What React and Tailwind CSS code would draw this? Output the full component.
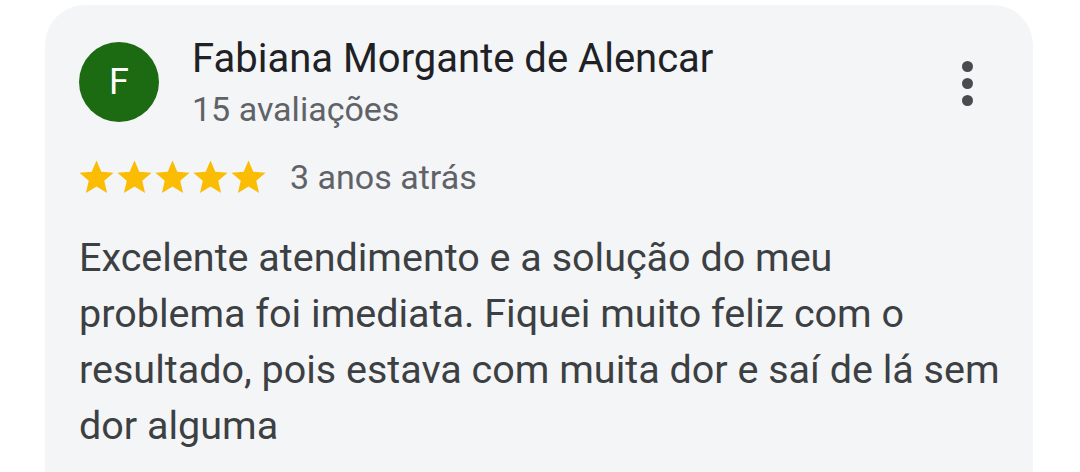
import React from 'react';

const Star = () => (
  <svg viewBox="0 0 24 24" className="w-[41px] h-[41px] -mx-[1.5px]" fill="#fbbc04">
    <path d="M12 17.27L18.18 21l-1.64-7.03L22 9.24l-7.19-.61L12 2 9.19 8.63 2 9.24l5.46 4.73L5.82 21z" />
  </svg>
);

const ReviewCard = () => (
  <div className="bg-[#f4f5f7] rounded-[40px] ml-[45px] mr-[47px] mt-[5px] pl-[34px] pr-[33px] pt-[30px] pb-[60px] font-['Roboto',sans-serif]">
    <div className="flex items-start">
      <div className="mt-[7px] w-[80px] h-[80px] rounded-full bg-[#1c6a12] flex items-center justify-center text-white text-[36px] shrink-0">
        F
      </div>
      <div className="ml-[33px] flex-1">
        <div className="text-[40px] leading-[48px] text-[#202124]">Fabiana Morgante de Alencar</div>
        <div className="text-[34px] leading-[40px] text-[#5f6368] mt-[6px]">15 avaliações</div>
      </div>
      <div className="flex flex-col items-center gap-[6px] mt-[26px] mr-[27px]">
        <span className="w-[11px] h-[11px] rounded-full bg-[#4a4b4e]" />
        <span className="w-[11px] h-[11px] rounded-full bg-[#4a4b4e]" />
        <span className="w-[11px] h-[11px] rounded-full bg-[#4a4b4e]" />
      </div>
    </div>
    <div className="flex items-center mt-[28px] h-[40px]">
      <div className="flex -ml-[2px]">
        <Star />
        <Star />
        <Star />
        <Star />
        <Star />
      </div>
      <span className="ml-[23px] text-[34px] leading-[40px] text-[#5f6368]">3 anos atrás</span>
    </div>
    <p className="mt-[33px] text-[39.5px] leading-[56px] text-[#3c4043]">
      Excelente atendimento e a solução do meu problema foi imediata. Fiquei muito feliz com o resultado, pois estava com muita dor e saí de lá sem dor alguma
    </p>
  </div>
);

export default function App() {
  return (
    <div className="w-[1080px] h-[472px] bg-white overflow-hidden">
      <ReviewCard />
    </div>
  );
}
